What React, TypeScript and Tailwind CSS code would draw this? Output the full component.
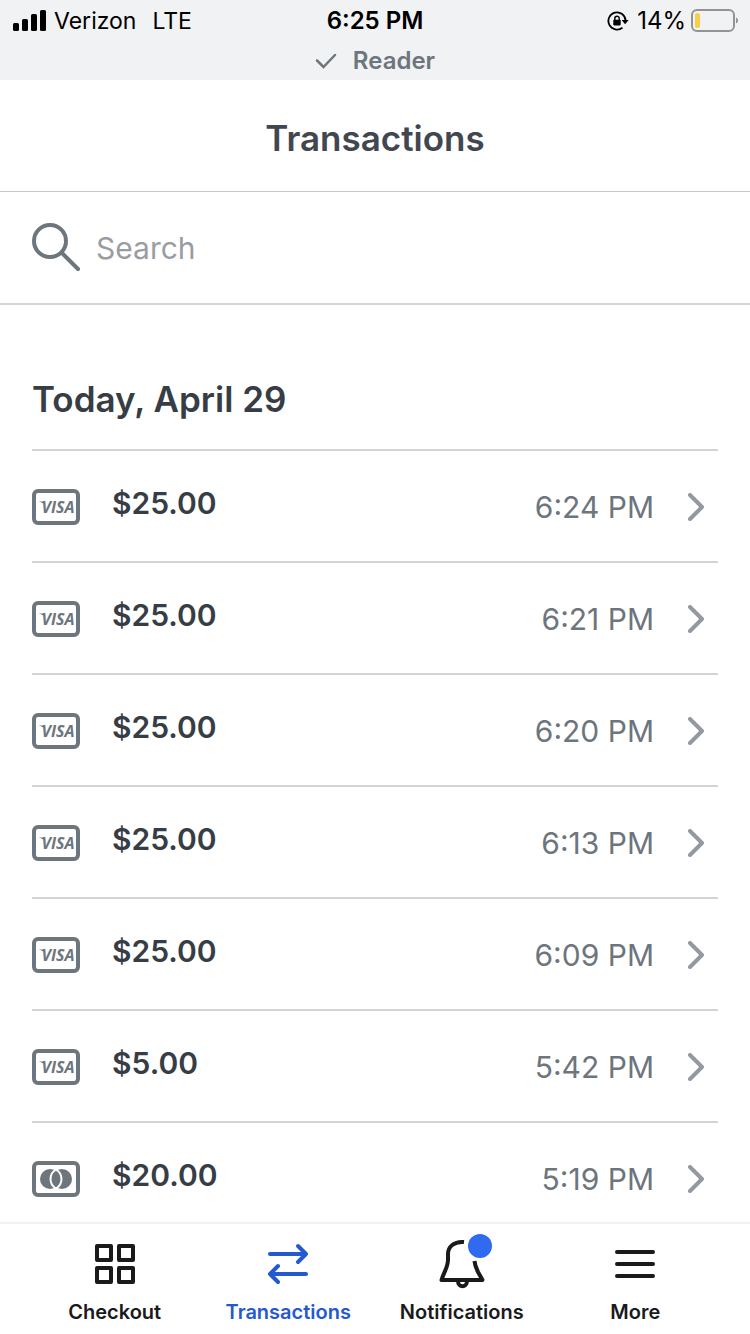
// src/App.tsx
import React from 'react';
import clsx from 'clsx';

type CardBrand = 'visa' | 'mastercard';

interface Transaction {
  amount: string;
  time: string;
  brand: CardBrand;
}

const transactions: Transaction[] = [
  { amount: '$25.00', time: '6:24 PM', brand: 'visa' },
  { amount: '$25.00', time: '6:21 PM', brand: 'visa' },
  { amount: '$25.00', time: '6:20 PM', brand: 'visa' },
  { amount: '$25.00', time: '6:13 PM', brand: 'visa' },
  { amount: '$25.00', time: '6:09 PM', brand: 'visa' },
  { amount: '$5.00', time: '5:42 PM', brand: 'visa' },
  { amount: '$20.00', time: '5:19 PM', brand: 'mastercard' },
];

const SignalIcon = () => (
  <svg width="34" height="22" viewBox="0 0 34 22" fill="currentColor" aria-hidden="true">
    <rect x="1" y="13" width="6" height="8" rx="1.5" />
    <rect x="10" y="9" width="6" height="12" rx="1.5" />
    <rect x="19" y="4" width="6" height="17" rx="1.5" />
    <rect x="28" y="0" width="6" height="21" rx="1.5" />
  </svg>
);

const RotationLockIcon = () => (
  <svg width="22" height="20" viewBox="0 0 22 20" fill="none" aria-hidden="true">
    <path d="M15.5 16.6A8.6 8.6 0 1 1 18.6 9.6" stroke="currentColor" strokeWidth="1.8" />
    <path d="M14.6 8.9h7l-3.5 4.4z" fill="currentColor" />
    <rect x="6.3" y="8.8" width="7.4" height="5.6" rx="0.8" fill="currentColor" />
    <path d="M7.8 9V7.4a2.2 2.2 0 0 1 4.4 0V9" stroke="currentColor" strokeWidth="1.4" />
  </svg>
);

const BatteryIcon = () => (
  <svg width="48" height="24" viewBox="0 0 48 24" fill="none" aria-hidden="true">
    <rect x="2" y="1" width="42" height="21" rx="5" stroke="#929497" strokeWidth="2" />
    <rect x="5" y="4" width="5" height="15" rx="2.5" fill="#f7ce46" />
    <path d="M46 8.5c1.4.5 2 1.7 2 3s-.6 2.5-2 3z" fill="#929497" />
  </svg>
);

const CardIcon: React.FC<{ brand: CardBrand }> = ({ brand }) => (
  <svg
    width="48"
    height="36"
    viewBox="0 0 48 36"
    fill="none"
    className="shrink-0 text-[#6d757d]"
    role="img"
    aria-label={brand}
  >
    <rect x="2" y="2" width="44" height="32" rx="4" stroke="currentColor" strokeWidth="4" />
    {brand === 'visa' ? (
      <>
        <path d="M6.500 12.500h5l1 3c-1.500-1.500-3.500-2.500-6-3z" fill="currentColor" />
        <text
          x="26"
          y="24"
          textAnchor="middle"
          fill="currentColor"
          className="font-['Open_Sans',sans-serif] text-[16px] font-bold italic"
        >
          VISA
        </text>
      </>
    ) : (
      <>
        <circle cx="18" cy="18" r="10" fill="currentColor" />
        <circle cx="30" cy="18" r="10" fill="currentColor" />
        <path
          d="M24 8.500a11 11 0 0 1 0 19a11 11 0 0 1 0-19z"
          fill="currentColor"
          stroke="#fff"
          strokeWidth="2"
        />
      </>
    )}
  </svg>
);

const ChevronIcon = () => (
  <svg width="18" height="28" viewBox="0 0 18 28" fill="none" aria-hidden="true">
    <path
      d="M2 2l12 12L2 26"
      stroke="#9399a1"
      strokeWidth="4"
      strokeLinecap="round"
      strokeLinejoin="round"
    />
  </svg>
);

const CheckoutIcon = () => (
  <svg width="48" height="52" viewBox="0 0 48 52" fill="none" stroke="currentColor" strokeWidth="4" strokeLinejoin="round" aria-hidden="true">
    <rect x="6" y="8" width="14" height="14" />
    <rect x="28" y="8" width="14" height="14" />
    <rect x="6" y="30" width="14" height="14" />
    <rect x="28" y="30" width="14" height="14" />
  </svg>
);

const TransactionsIcon = () => (
  <svg width="48" height="52" viewBox="0 0 48 52" fill="none" stroke="currentColor" strokeWidth="4" strokeLinecap="round" strokeLinejoin="round" aria-hidden="true">
    <path d="M6 16h36M34 8l8 8-8 8" />
    <path d="M42 36H6M14 28l-8 8 8 8" />
  </svg>
);

const BellIcon = () => (
  <svg width="60" height="52" viewBox="0 2 60 52" fill="none" stroke="currentColor" strokeWidth="4" strokeLinejoin="round" className="overflow-visible" aria-hidden="true">
    <path d="M32 6C22 5 16 11 16 18v6c0 7-4 12-6.500 20h41L46 36c-2-4-3.200-7-3.500-11" />
    <path d="M26 45c0 7 9 7 9 0" />
    <circle cx="48" cy="10" r="12" fill="#2f6af0" stroke="none" />
  </svg>
);

const MoreIcon = () => (
  <svg width="48" height="52" viewBox="0 0 48 52" fill="none" stroke="currentColor" strokeWidth="4" strokeLinecap="round" aria-hidden="true">
    <path d="M6 14h36M6 26h36M6 38h36" />
  </svg>
);

const tabs = [
  { label: 'Checkout', icon: <CheckoutIcon /> },
  { label: 'Transactions', icon: <TransactionsIcon />, active: true },
  { label: 'Notifications', icon: <BellIcon /> },
  { label: 'More', icon: <MoreIcon /> },
];

const StatusBar = () => (
  <div className="h-20 shrink-0 bg-[#f1f2f4] pt-px text-black">
    <div className="grid h-10 grid-cols-[1fr_auto_1fr] items-center px-3 text-2xl">
      <div className="flex items-center gap-2 text-[23px]">
        <SignalIcon />
        <span>Verizon</span>
        <span className="ml-2">LTE</span>
      </div>
      <span className="font-semibold">6:25 PM</span>
      <div className="flex items-center justify-end gap-1">
        <RotationLockIcon />
        <span className="ml-1">14%</span>
        <BatteryIcon />
      </div>
    </div>
    <div className="flex h-10 items-center justify-center gap-4 text-[#6d757d]">
      <svg width="22" height="16" viewBox="0 0 22 16" fill="none" aria-hidden="true">
        <path d="M2 7.500l6.500 6.500L20 2" stroke="currentColor" strokeWidth="2.500" strokeLinecap="round" />
      </svg>
      <span className="text-2xl font-semibold">Reader</span>
    </div>
  </div>
);

const TransactionRow: React.FC<{ transaction: Transaction }> = ({ transaction }) => (
  <li className="border-t-2 border-[#d3d4d6]">
    <button className="flex h-[110px] w-full items-center pr-3 pt-0.5 text-left">
      <CardIcon brand={transaction.brand} />
      <span className="ml-8 pb-2 text-[30px] leading-10 font-semibold text-[#373d45]">
        {transaction.amount}
      </span>
      <span className="ml-auto mr-8 pr-0.5 text-[30px] leading-10 text-[#6d757d]">
        {transaction.time}
      </span>
      <ChevronIcon />
    </button>
  </li>
);

const App: React.FC = () => (
  <div className="flex h-screen flex-col bg-white font-[Inter,sans-serif]">
    <StatusBar />

    <header className="flex h-28 shrink-0 items-center justify-center border-b border-[#c4c6c8] pt-1">
      <h1 className="text-[35px] leading-11 font-semibold text-[#42474f]">Transactions</h1>
    </header>

    <label className="flex h-[113px] shrink-0 items-center gap-4 border-b-2 border-[#d3d4d6] px-8">
      <svg width="48" height="50" viewBox="0 0 48 50" fill="none" stroke="#6d757d" strokeWidth="4" aria-hidden="true">
        <circle cx="18" cy="18" r="16" />
        <path d="M30 30l16 16" strokeLinecap="round" />
      </svg>
      <input
        type="search"
        aria-label="Search"
        placeholder="Search"
        className="min-w-0 flex-1 text-[30px] leading-10 outline-none placeholder:text-[#989da4]"
      />
    </label>

    <main className="min-h-0 flex-1 overflow-y-auto px-8 [scrollbar-width:none]">
      <h2 className="pb-7 pt-18 text-[35px] leading-11 font-semibold text-[#373d45]">Today, April 29</h2>
      <ul>
        {transactions.map((transaction) => (
          <TransactionRow key={transaction.time} transaction={transaction} />
        ))}
      </ul>
    </main>

    <nav className="grid h-28 shrink-0 grid-cols-4 border-t-2 border-[#f0f1f2] px-7 pt-3.5">
      {tabs.map((tab) => (
        <button
          key={tab.label}
          className={clsx(
            'flex flex-col items-center gap-2 text-xl font-semibold',
            tab.active ? 'text-[#2559cf]' : 'text-[#1a1a1a]'
          )}
        >
          {tab.icon}
          {tab.label}
        </button>
      ))}
    </nav>
  </div>
);

export default App;
